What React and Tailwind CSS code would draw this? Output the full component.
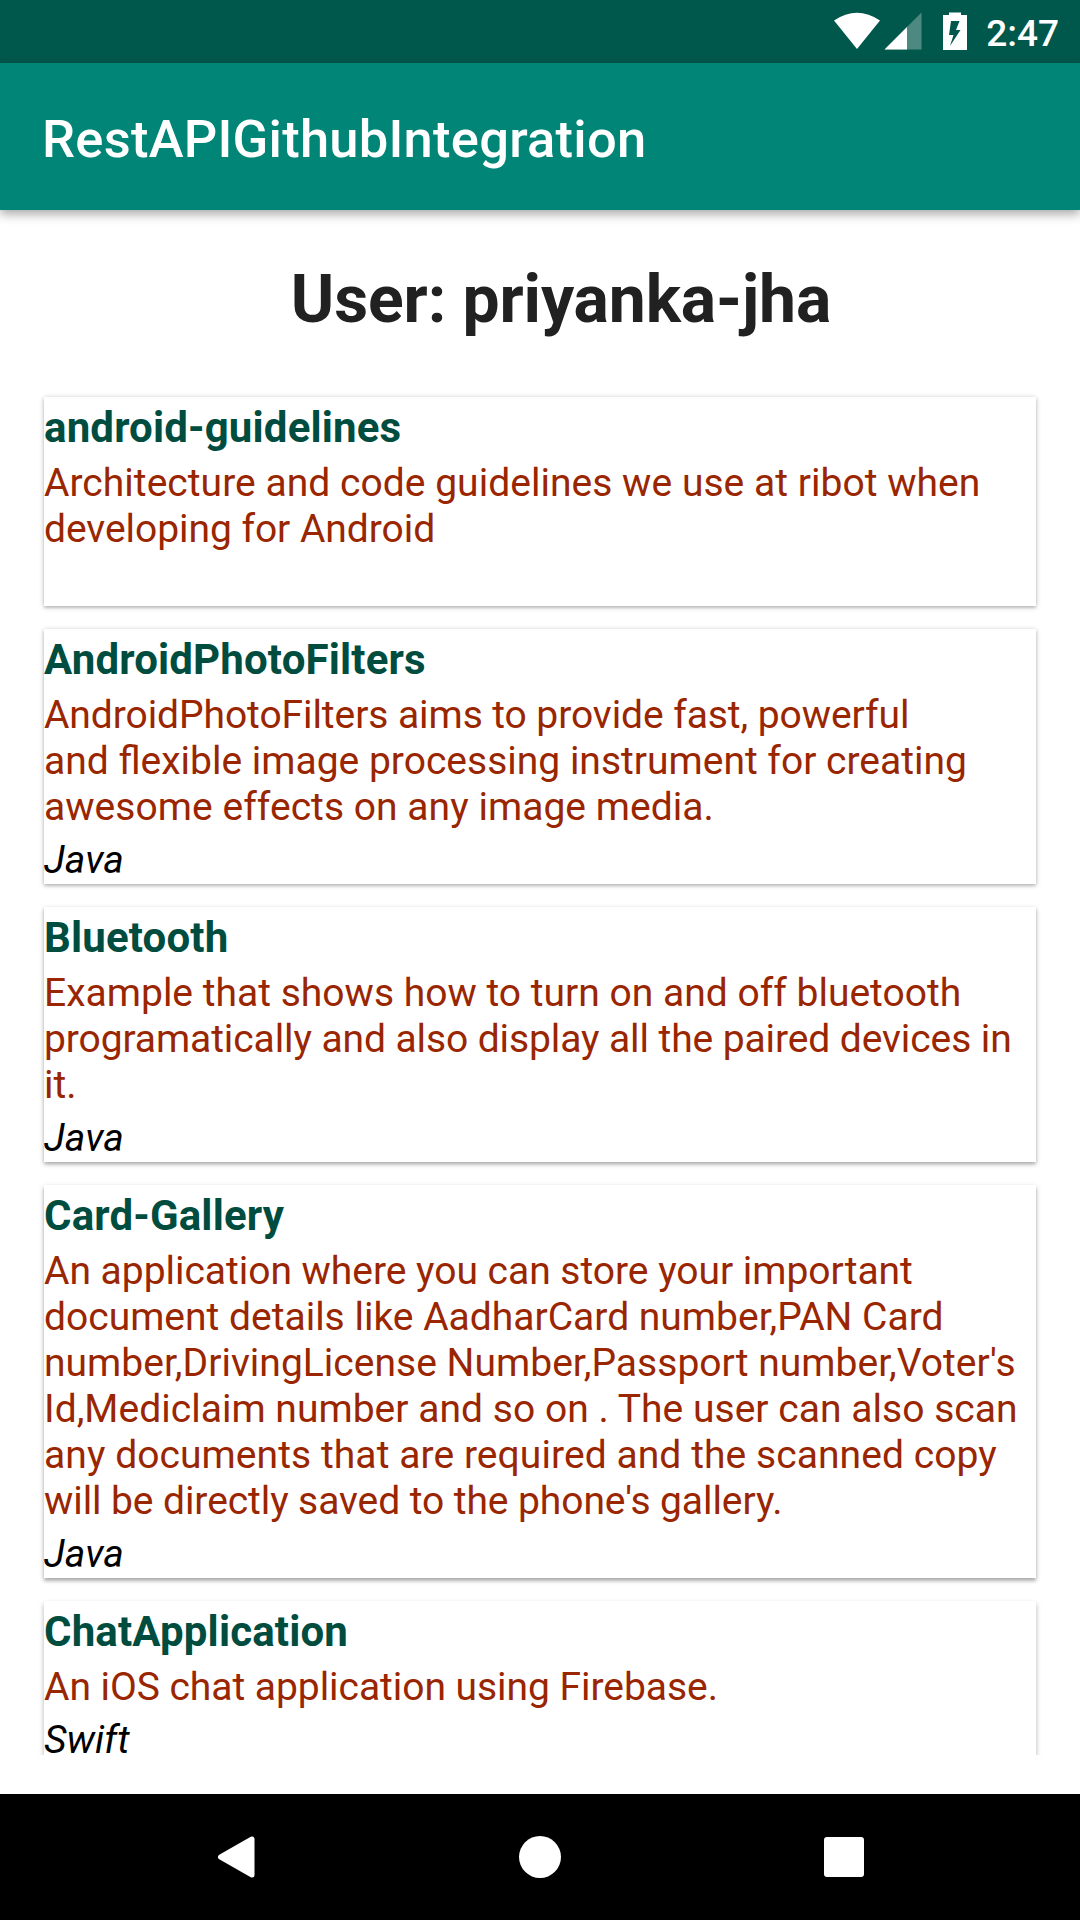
const repos = [
  { name: 'android-guidelines', shadow: 'shadow-[0_1px_5px_rgba(0,0,0,0.28),0_2px_2px_rgba(0,0,0,0.1)]', lines: [['Architecture and code guidelines we use at ribot when', 'tracking-[0.035px]'], ['developing for Android', 'tracking-[-0.05px]']], language: '' },
  { name: 'AndroidPhotoFilters', shadow: 'shadow-[0_1px_5px_rgba(0,0,0,0.25),0_2px_3px_rgba(0,0,0,0.13)]', lines: [['AndroidPhotoFilters aims to provide fast, powerful', 'tracking-[-0.075px]'], ['and flexible image processing instrument for creating', 'tracking-normal'], ['awesome effects on any image media.', 'tracking-[0.04px]']], language: 'Java' },
  { name: 'Bluetooth', shadow: 'shadow-[0_2px_5px_rgba(0,0,0,0.25),0_2px_3px_rgba(0,0,0,0.15)]', lines: [['Example that shows how to turn on and off bluetooth', 'tracking-[0.01px]'], ['programatically and also display all the paired devices in', 'tracking-[-0.095px]'], ['it.', 'tracking-normal']], language: 'Java' },
  { name: 'Card-Gallery', shadow: 'shadow-[0_2px_5px_rgba(0,0,0,0.25),0_3px_3px_rgba(0,0,0,0.16)]', lines: [['An application where you can store your important', 'tracking-[-0.025px]'], ['document details like AadharCard number,PAN Card', 'tracking-normal'], ["number,DrivingLicense Number,Passport number,Voter's", 'tracking-[0.025px]'], ['Id,Mediclaim number and so on . The user can also scan', 'tracking-[0.03px]'], ['any documents that are required and the scanned copy', 'tracking-[0.07px]'], ["will be directly saved to the phone's gallery.", 'tracking-[-0.08px]']], language: 'Java' },
  { name: 'ChatApplication', shadow: 'shadow-[0_3px_5px_rgba(0,0,0,0.3)]', lines: [['An iOS chat application using Firebase.', 'tracking-[-0.045px]']], language: 'Swift' },
];

function StatusBar() {
  return (
    <div className="flex h-[63px] shrink-0 items-center justify-end bg-[#00574b] pr-[21px] text-white">
      <svg className="h-[63px] w-[150px]" viewBox="829 0 150 63" fill="white">
        <path d="M834 20.5Q857 5 880 20.5L857 49Z" />
        <path d="M921.5 12.5V49.5H884.5Z" opacity=".3" />
        <path d="M907 27V49.5H884.5Z" />
        <path fillRule="evenodd" d="M949 12.5H961V15H967V50H943V15H949ZM951 21L949 35H953.5L950 46L960.500 30H956L959.500 21Z" />
      </svg>
      <span className="ml-[7px] pt-[3px] text-[37px] font-medium leading-none">2:47</span>
    </div>
  );
}

function RepoCard({ repo }) {
  return (
    <li className={`bg-white pt-[5px] ${repo.shadow}`}>
      <h2 className="h-[52px] text-[42px] font-bold leading-[52px] tracking-[0.16px] text-[#004d40]">{repo.name}</h2>
      <p className="pt-[6px] text-[39px] leading-[46px] text-[#992600]">
        {repo.lines.map(([text, tracking]) => <span className={`block whitespace-nowrap ${tracking}`} key={text}>{text}</span>)}
      </p>
      <p className="h-[54px] pt-[5px] text-[39px] italic leading-[50px] text-black">{repo.language}</p>
    </li>
  );
}

export default function App() {
  return (
    <div className="flex h-[1920px] w-[1080px] flex-col overflow-hidden bg-white font-['Roboto',sans-serif]">
      <StatusBar />
      <header className="z-10 flex h-[147px] shrink-0 items-center bg-[#008577] pt-[5px] pl-[42px] text-[52.5px] font-medium tracking-[0.24px] text-white shadow-[0_4px_10px_rgba(0,0,0,0.35)]">RestAPIGithubIntegration</header>
      <main className="flex min-h-0 flex-1 flex-col bg-white pb-[39px]">
        <h1 className="shrink-0 pt-[51px] pl-[42px] text-center text-[66px] font-bold leading-[78px] tracking-[-0.1px] text-[#212121]">User: priyanka-jha</h1>
        <ul className="mt-[53px] flex min-h-0 flex-1 flex-col gap-[23px] overflow-hidden px-[44px] pt-[5px]">
          {repos.map((repo) => <RepoCard key={repo.name} repo={repo} />)}
        </ul>
      </main>
      <nav className="h-[126px] shrink-0 bg-black">
        <svg className="h-[126px] w-[1080px]" viewBox="0 0 1080 126" fill="white">
          <path d="M220.5 63L252 45V81Z" stroke="white" strokeWidth="5" strokeLinejoin="round" />
          <circle cx="540" cy="63" r="21" />
          <rect x="824" y="43" width="40" height="40" rx="3" />
        </svg>
      </nav>
    </div>
  );
}
